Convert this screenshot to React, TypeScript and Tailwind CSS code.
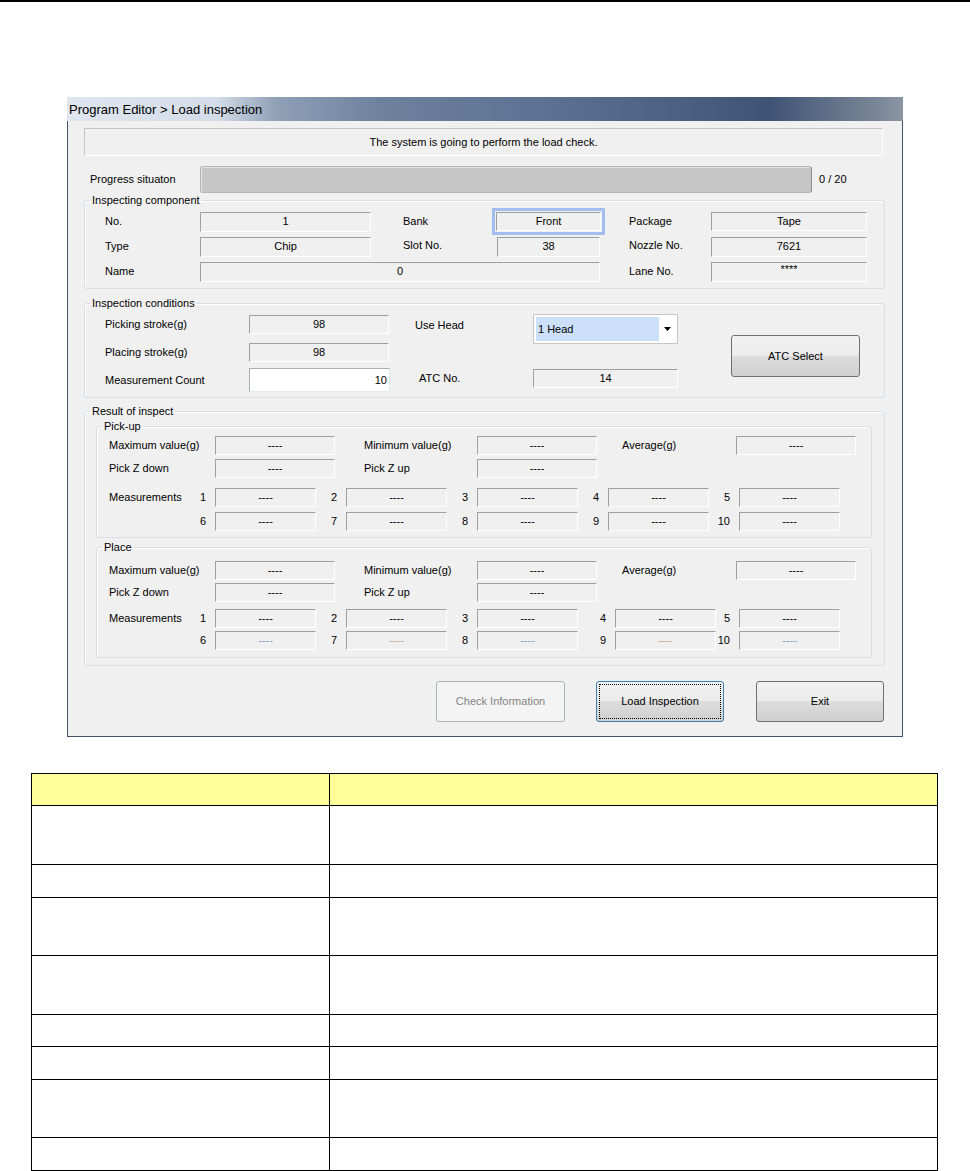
import type React from "react"

const FONT = "font-['Liberation_Sans',Arial,sans-serif]"

// sunken read-only text box
const Field = ({ className = "", children }: { className?: string; children?: React.ReactNode }) => (
  <div
    className={`flex items-center justify-center border border-t-[#a0a0a0] border-l-[#a0a0a0] border-r-white border-b-white bg-[#f0f0f0] text-[11px] leading-none ${className}`}
  >
    {children}
  </div>
)

const Group = ({ title, className = "", children }: { title: string; className?: string; children: React.ReactNode }) => (
  <fieldset className={`rounded-[3px] border border-[#d5dfe5] shadow-[inset_1px_1px_0_#ffffff] ${className}`}>
    <legend className="ml-[5px] px-[2px] text-[11px] leading-[13px]">{title}</legend>
    {children}
  </fieldset>
)

type BtnKind = "normal" | "disabled" | "focused"

const Button = ({ label, kind = "normal", className = "" }: { label: string; kind?: BtnKind; className?: string }) => {
  if (kind === "disabled") {
    return (
      <div className={`flex items-center justify-center rounded-[3px] border border-[#adb2b5] bg-[#f4f4f4] text-[11px] text-[#838383] ${className}`}>
        {label}
      </div>
    )
  }
  if (kind === "focused") {
    return (
      <div className={`flex rounded-[3px] border border-[#3c7fb1] bg-[linear-gradient(to_bottom,#f2f2f2_0%,#ebebeb_50%,#dddddd_50%,#cfcfcf_100%)] p-[2px] text-[11px] ${className}`}>
        <div className="flex flex-1 items-center justify-center border border-dotted border-black">{label}</div>
      </div>
    )
  }
  return (
    <div className={`flex items-center justify-center rounded-[3px] border border-[#707070] bg-[linear-gradient(to_bottom,#f2f2f2_0%,#ebebeb_50%,#dddddd_50%,#cfcfcf_100%)] text-[11px] ${className}`}>
      {label}
    </div>
  )
}

type Meas = { n: number; cell: string; color?: string }

const pickRow1: Meas[] = [
  { n: 1, cell: "w-[30px]" },
  { n: 2, cell: "w-[30px]" },
  { n: 3, cell: "w-[30px]" },
  { n: 4, cell: "w-[30px]" },
  { n: 5, cell: "w-[30px]" },
]
const pickRow2: Meas[] = [
  { n: 6, cell: "w-[30px]" },
  { n: 7, cell: "w-[30px]" },
  { n: 8, cell: "w-[30px]" },
  { n: 9, cell: "w-[30px]" },
  { n: 10, cell: "w-[30px]" },
]
const placeRow1: Meas[] = [
  { n: 1, cell: "w-[30px]" },
  { n: 2, cell: "w-[30px]" },
  { n: 3, cell: "w-[30px]" },
  { n: 4, cell: "w-[37px]" },
  { n: 5, cell: "w-[23px]" },
]
const placeRow2: Meas[] = [
  { n: 6, cell: "w-[30px]", color: "text-[#7f9cc8]" },
  { n: 7, cell: "w-[30px]", color: "text-[#c4a07c]" },
  { n: 8, cell: "w-[30px]", color: "text-[#7f9cc8]" },
  { n: 9, cell: "w-[37px]", color: "text-[#c4a07c]" },
  { n: 10, cell: "w-[23px]", color: "text-[#7f9cc8]" },
]

const MeasRow = ({ label, items, className = "" }: { label?: string; items: Meas[]; className?: string }) => (
  <div className={`flex h-[19px] items-center ${className}`}>
    <div className="ml-[12px] w-[76px] text-[11px]">{label}</div>
    {items.map((m) => (
      <div key={m.n} className="flex items-center">
        <div className={`pr-[9px] text-right text-[11px] ${m.cell}`}>{m.n}</div>
        <Field className={`h-[19px] w-[101px] ${m.color ?? ""}`}>----</Field>
      </div>
    ))}
  </div>
)

const ResultBlock = ({ title, rows, className = "", gaps }: { title: string; rows: Meas[][]; className?: string; gaps: string[] }) => (
  <Group title={title} className={`ml-[11px] w-[776px] ${className}`}>
    <div className={`flex h-[19px] items-center ${gaps[0]}`}>
      <div className="ml-[12px] w-[106px] text-[11px]">Maximum value(g)</div>
      <Field className="h-[19px] w-[120px]">----</Field>
      <div className="ml-[29px] w-[113px] text-[11px]">Minimum value(g)</div>
      <Field className="h-[19px] w-[120px]">----</Field>
      <div className="ml-[25px] w-[114px] text-[11px]">Average(g)</div>
      <Field className="h-[19px] w-[120px]">----</Field>
    </div>
    <div className={`flex h-[19px] items-center ${gaps[1]}`}>
      <div className="ml-[12px] w-[106px] text-[11px]">Pick Z down</div>
      <Field className="h-[19px] w-[120px]">----</Field>
      <div className="ml-[29px] w-[113px] text-[11px]">Pick Z up</div>
      <Field className="h-[19px] w-[120px]">----</Field>
    </div>
    <MeasRow label="Measurements" items={rows[0]} className={gaps[2]} />
    <MeasRow items={rows[1]} className={gaps[3]} />
  </Group>
)

export default function App() {
  const tableRows = ["h-[59px]", "h-[33px]", "h-[58px]", "h-[59px]", "h-[32px]", "h-[33px]", "h-[58px]", "h-[33px]"]

  return (
    <div className={`min-h-[1171px] w-[970px] bg-white text-black ${FONT}`}>
      <div className="h-[2px] w-full bg-black" />

      {/* dialog window */}
      <div className="ml-[67px] mt-[95px] flex h-[640px] w-[836px] flex-col">
        <div className="flex h-[24px] items-center bg-[linear-gradient(to_right,#dfe6ef_0%,#d3dce8_18%,#8fa0b7_25%,#6d809c_38%,#5c7192_58%,#4a5f80_75%,#3f5374_84%,#7a8798_97%,#8b96a4_100%)] pl-[2px] text-[13px] leading-none">
          Program Editor &gt; Load inspection
        </div>
        <div className="flex flex-1 flex-col border-x border-b border-[#44546a] bg-[#f0f0f0] pt-[7px]">
          <div className="ml-[16px] flex h-[28px] w-[799px] items-center justify-center border border-t-[#c4c4c4] border-l-[#c4c4c4] border-r-white border-b-white text-[11px]">
            The system is going to perform the load check.
          </div>

          <div className="mt-[10px] flex h-[27px] items-center">
            <div className="ml-[22px] w-[110px] text-[11px]">Progress situaton</div>
            <div className="h-[27px] w-[612px] rounded-[3px] border border-[#b4b4b4] border-r-[#8e8e8e] bg-[#c6c6c6] shadow-[inset_1px_1px_0_#e6e6e6]" />
            <div className="ml-[7px] text-[11px]">0 / 20</div>
          </div>

          <Group title="Inspecting component" className="ml-[16px] mt-[1px] w-[801px] pb-[4px]">
            <div className="mt-[2px] flex h-[25px] items-center">
              <div className="ml-[20px] w-[95px] text-[11px]">No.</div>
              <Field className="h-[20px] w-[171px]">1</Field>
              <div className="ml-[32px] w-[89px] text-[11px]">Bank</div>
              <div className="flex h-[27px] w-[113px] border-[3px] border-[#a3bdee] p-[1px]">
                <Field className="flex-1">Front</Field>
              </div>
              <div className="ml-[24px] w-[82px] text-[11px]">Package</div>
              <Field className="h-[19px] w-[156px]">Tape</Field>
            </div>
            <div className="flex h-[25px] items-center">
              <div className="ml-[20px] w-[95px] text-[11px]">Type</div>
              <Field className="h-[20px] w-[171px]">Chip</Field>
              <div className="ml-[32px] w-[94px] pb-[2px] text-[11px]">Slot No.</div>
              <Field className="h-[20px] w-[103px]">38</Field>
              <div className="ml-[29px] w-[82px] pb-[2px] text-[11px]">Nozzle No.</div>
              <Field className="h-[20px] w-[156px]">7621</Field>
            </div>
            <div className="flex h-[25px] items-center">
              <div className="ml-[20px] w-[95px] text-[11px]">Name</div>
              <Field className="h-[20px] w-[400px]">0</Field>
              <div className="ml-[29px] w-[82px] text-[11px]">Lane No.</div>
              <Field className="h-[20px] w-[156px] pb-[4px]">****</Field>
            </div>
          </Group>

          <Group title="Inspection conditions" className="ml-[16px] mt-[8px] w-[801px] pb-[3px]">
            <div className="flex h-[84px]">
              <div className="flex flex-col">
                <div className="flex h-[28px] items-center">
                  <div className="ml-[20px] w-[144px] text-[11px]">Picking stroke(g)</div>
                  <Field className="h-[19px] w-[140px]">98</Field>
                </div>
                <div className="flex h-[28px] items-center">
                  <div className="ml-[20px] w-[144px] text-[11px]">Placing stroke(g)</div>
                  <Field className="h-[19px] w-[140px]">98</Field>
                </div>
                <div className="flex h-[28px] items-center">
                  <div className="ml-[20px] w-[144px] text-[11px]">Measurement Count</div>
                  <div className="flex h-[24px] w-[141px] items-center justify-end border border-[#abadb3] border-b-[#e3e9ef] border-r-[#e3e9ef] bg-white pr-[2px] text-[11px]">
                    10
                  </div>
                </div>
              </div>

              <div className="ml-[25px] flex flex-col">
                <div className="mt-[4px] flex items-start">
                  <div className="w-[118px] pt-[5px] text-[11px] leading-[13px]">Use Head</div>
                  <div className="flex h-[30px] w-[145px] border border-[#c6c6c6] bg-white p-[2px]">
                    <div className="flex w-[123px] items-center bg-[#cce0fb] pl-[2px] text-[11px]">1 Head</div>
                    <div className="flex flex-1 items-center justify-center">
                      <svg width="7" height="4" viewBox="0 0 7 4">
                        <path d="M0 0h7L3.5 4z" fill="#000" />
                      </svg>
                    </div>
                  </div>
                </div>
                <div className="mt-[25px] flex items-center">
                  <div className="w-[118px] pl-[4px] text-[11px]">ATC No.</div>
                  <Field className="h-[19px] w-[145px]">14</Field>
                </div>
              </div>

              <Button label="ATC Select" className="ml-[53px] mt-[25px] h-[42px] w-[129px]" />
            </div>
          </Group>

          <Group title="Result of inspect" className="ml-[16px] mt-[7px] w-[801px] pb-[7px]">
            <ResultBlock
              title="Pick-up"
              rows={[pickRow1, pickRow2]}
              className="mt-[2px] pb-[6px]"
              gaps={["mt-[3px]", "mt-[4px]", "mt-[10px]", "mt-[5px]"]}
            />
            <ResultBlock
              title="Place"
              rows={[placeRow1, placeRow2]}
              className="mt-[3px] pb-[7px]"
              gaps={["mt-[7px]", "mt-[3px]", "mt-[7px]", "mt-[3px]"]}
            />
          </Group>

          <div className="mt-[15px] flex">
            <Button label="Check Information" kind="disabled" className="ml-[368px] h-[41px] w-[129px]" />
            <Button label="Load Inspection" kind="focused" className="ml-[31px] h-[41px] w-[128px]" />
            <Button label="Exit" className="ml-[32px] h-[41px] w-[128px]" />
          </div>
        </div>
      </div>

      {/* description table */}
      <table className="ml-[31px] mt-[36px] w-[907px] border-collapse">
        <tbody>
          <tr className="h-[32px] bg-[#ffff99]">
            <td className="w-[298px] border-[1.5px] border-black" />
            <td className="border-[1.5px] border-black" />
          </tr>
          {tableRows.map((h, i) => (
            <tr key={i} className={h}>
              <td className="border-[1.5px] border-black" />
              <td className="border-[1.5px] border-black" />
            </tr>
          ))}
        </tbody>
      </table>
    </div>
  )
}
